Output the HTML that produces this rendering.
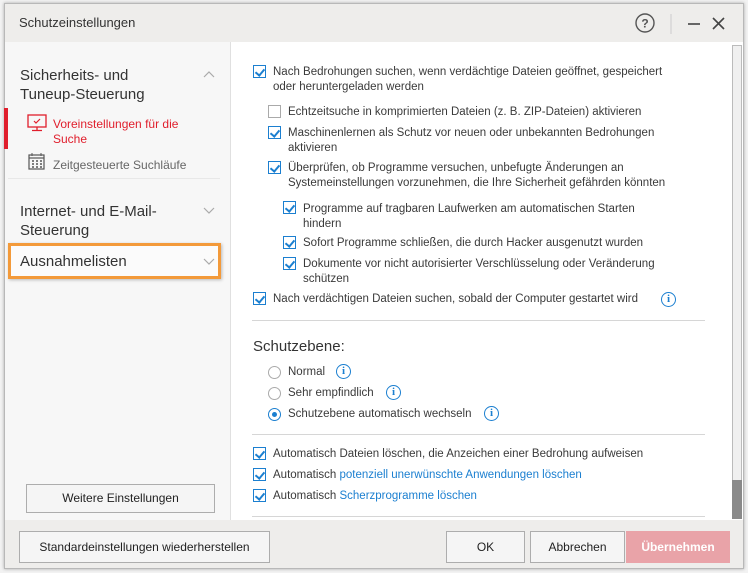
<!DOCTYPE html>
<html><head><meta charset="utf-8"><style>
*{margin:0;padding:0;box-sizing:border-box}
body{width:748px;height:573px;background:#f2f2f2;font-family:"Liberation Sans",sans-serif;position:relative;overflow:hidden;color:#333}
.a{position:absolute;white-space:nowrap}
#dlg{position:absolute;left:4px;top:3px;width:740px;height:566px;background:#eeedeb;border:1px solid #b8b8b8;box-shadow:0 0 3px rgba(0,0,0,.3)}
.t{font-size:11.5px;color:#3a3a3a;line-height:15px}
.h{font-size:15px;color:#333;line-height:19px}
.cb{position:absolute;width:13px;height:13px;border:1px solid #1b7fd0;background:#fff}
.cb::after{content:"";position:absolute;left:3px;top:1px;width:4px;height:7px;border:solid #1b7fd0;border-width:0 2px 2px 0;transform:rotate(40deg)}
.cb.off{border-color:#aaa}.cb.off::after{display:none}
.rd{position:absolute;width:13px;height:13px;border:1px solid #aaa;border-radius:50%;background:#fff}
.rd.on{border-color:#1b7fd0}.rd.on::after{content:"";position:absolute;left:3px;top:3px;width:5px;height:5px;border-radius:50%;background:#1b7fd0}
.i{position:absolute;width:15px;height:15px;border:1.5px solid #1b7fd0;border-radius:50%;color:#1b7fd0;font:bold 11px "Liberation Serif",serif;text-align:center;line-height:12px}
.sep{position:absolute;height:1px;background:#d6d6d6}
.btn{position:absolute;border:1px solid #adadad;background:#f5f5f5;font-size:12px;color:#222;text-align:center}
.lnk{color:#1b7fd0}
</style></head><body>
<div id="dlg"></div>
<div class="a" style="left:19px;top:15px;font-size:13px;color:#333">Schutzeinstellungen</div>
<svg class="a" style="left:634px;top:12px" width="100" height="24"><circle cx="11" cy="11" r="9" fill="none" stroke="#555" stroke-width="1.4"/><text x="11" y="15.5" font-size="12" font-weight="bold" text-anchor="middle" fill="#555" font-family="Liberation Sans">?</text><line x1="37" y1="2" x2="37" y2="22" stroke="#ccc"/><line x1="54" y1="12" x2="66" y2="12" stroke="#444" stroke-width="1.6"/><path d="M79 6L90 17M90 6L79 17" stroke="#444" stroke-width="1.6"/></svg>
<!-- left panel -->
<div class="a" style="left:5px;top:42px;width:226px;height:478px;background:#f7f7f7;border-right:1px solid #e0e0e0"></div>
<div class="a h" style="left:20px;top:66px">Sicherheits- und<br>Tuneup-Steuerung</div>
<svg class="a" style="left:202px;top:70px" width="14" height="10"><path d="M2 7L7 2L12 7" fill="none" stroke="#aaa" stroke-width="1.2"/></svg>
<div class="a" style="left:4px;top:108px;width:4px;height:41px;background:#e01e2c"></div>
<svg class="a" style="left:27px;top:114px" width="20" height="18"><rect x="1" y="1" width="18" height="12" fill="none" stroke="#e01e2c" stroke-width="1.3"/><path d="M7 7l2 2 4-4" fill="none" stroke="#e01e2c" stroke-width="1.2"/><path d="M10 13v3M5 16.5h10" stroke="#e01e2c" stroke-width="1.3"/></svg>
<div class="a t" style="left:53px;top:117px;color:#e01e2c;font-size:12px">Voreinstellungen für die<br>Suche</div>
<svg class="a" style="left:28px;top:153px" width="18" height="18"><rect x="1" y="2" width="15" height="14" fill="none" stroke="#555" stroke-width="1.2"/><path d="M1 5h15" stroke="#555" stroke-width="1.2"/><path d="M4 8h2M8 8h2M12 8h2M4 11h2M8 11h2M12 11h2M4 14h2M8 14h2M12 14h2" stroke="#555" stroke-width="1.5"/><path d="M4 0v3M13 0v3" stroke="#555"/></svg>
<div class="a t" style="left:53px;top:158px;color:#666;font-size:12px">Zeitgesteuerte Suchläufe</div>
<div class="sep" style="left:8px;top:178px;width:212px;background:#e8e8e8"></div>
<div class="a h" style="left:20px;top:202px">Internet- und E-Mail-<br>Steuerung</div>
<svg class="a" style="left:202px;top:206px" width="14" height="10"><path d="M2 2L7 7L12 2" fill="none" stroke="#aaa" stroke-width="1.2"/></svg>
<div class="a" style="left:8px;top:243px;width:213px;height:36px;border:3px solid #f39a3a;background:#fbfbfb;box-shadow:1px 1px 3px rgba(0,0,0,.25)"></div>
<div class="a h" style="left:20px;top:252px">Ausnahmelisten</div>
<svg class="a" style="left:202px;top:257px" width="14" height="10"><path d="M2 2L7 7L12 2" fill="none" stroke="#aaa" stroke-width="1.2"/></svg>
<div class="btn" style="left:26px;top:484px;width:189px;height:29px;line-height:27px">Weitere Einstellungen</div>
<!-- right panel -->
<div class="a" style="left:231px;top:42px;width:512px;height:478px;background:#fff"></div>
<div class="a" style="left:732px;top:45px;width:10px;height:474px;background:#f0f0f0;border:1px solid #bbb"></div>
<div class="a" style="left:732px;top:480px;width:10px;height:39px;background:#8a8a8a"></div>

<div class="cb" style="left:253px;top:65px"></div>
<div class="a t" style="left:273px;top:65px">Nach Bedrohungen suchen, wenn verdächtige Dateien geöffnet, gespeichert<br>oder heruntergeladen werden</div>
<div class="cb off" style="left:268px;top:105px"></div>
<div class="a t" style="left:288px;top:105px">Echtzeitsuche in komprimierten Dateien (z. B. ZIP-Dateien) aktivieren</div>
<div class="cb" style="left:268px;top:126px"></div>
<div class="a t" style="left:288px;top:126px">Maschinenlernen als Schutz vor neuen oder unbekannten Bedrohungen<br>aktivieren</div>
<div class="cb" style="left:268px;top:161px"></div>
<div class="a t" style="left:288px;top:161px">Überprüfen, ob Programme versuchen, unbefugte Änderungen an<br>Systemeinstellungen vorzunehmen, die Ihre Sicherheit gefährden könnten</div>
<div class="cb" style="left:283px;top:201px"></div>
<div class="a t" style="left:303px;top:202px">Programme auf tragbaren Laufwerken am automatischen Starten<br>hindern</div>
<div class="cb" style="left:283px;top:236px"></div>
<div class="a t" style="left:303px;top:236px">Sofort Programme schließen, die durch Hacker ausgenutzt wurden</div>
<div class="cb" style="left:283px;top:257px"></div>
<div class="a t" style="left:303px;top:257px">Dokumente vor nicht autorisierter Verschlüsselung oder Veränderung<br>schützen</div>
<div class="cb" style="left:253px;top:292px"></div>
<div class="a t" style="left:273px;top:292px">Nach verdächtigen Dateien suchen, sobald der Computer gestartet wird</div>
<div class="i" style="left:661px;top:292px">i</div>
<div class="sep" style="left:252px;top:320px;width:453px"></div>
<div class="a h" style="left:253px;top:337px">Schutzebene:</div>
<div class="rd" style="left:268px;top:366px"></div>
<div class="a t" style="left:288px;top:365px">Normal</div>
<div class="i" style="left:336px;top:364px">i</div>
<div class="rd" style="left:268px;top:387px"></div>
<div class="a t" style="left:288px;top:386px">Sehr empfindlich</div>
<div class="i" style="left:386px;top:385px">i</div>
<div class="rd on" style="left:268px;top:408px"></div>
<div class="a t" style="left:288px;top:407px">Schutzebene automatisch wechseln</div>
<div class="i" style="left:484px;top:406px">i</div>
<div class="sep" style="left:252px;top:434px;width:453px"></div>
<div class="cb" style="left:253px;top:447px"></div>
<div class="a t" style="left:273px;top:447px">Automatisch Dateien löschen, die Anzeichen einer Bedrohung aufweisen</div>
<div class="cb" style="left:253px;top:468px"></div>
<div class="a t" style="left:273px;top:468px">Automatisch <span class="lnk">potenziell unerwünschte Anwendungen löschen</span></div>
<div class="cb" style="left:253px;top:489px"></div>
<div class="a t" style="left:273px;top:489px">Automatisch <span class="lnk">Scherzprogramme löschen</span></div>
<div class="sep" style="left:252px;top:516px;width:453px"></div>
<!-- bottom -->
<div class="btn" style="left:19px;top:531px;width:251px;height:32px;line-height:30px">Standardeinstellungen wiederherstellen</div>
<div class="btn" style="left:446px;top:531px;width:79px;height:32px;line-height:30px">OK</div>
<div class="btn" style="left:530px;top:531px;width:95px;height:32px;line-height:30px">Abbrechen</div>
<div class="btn" style="left:626px;top:531px;width:104px;height:32px;line-height:30px;background:#e9a3a8;border-color:#e9a3a8;color:#fff;font-weight:bold">Übernehmen</div>
</body></html>
